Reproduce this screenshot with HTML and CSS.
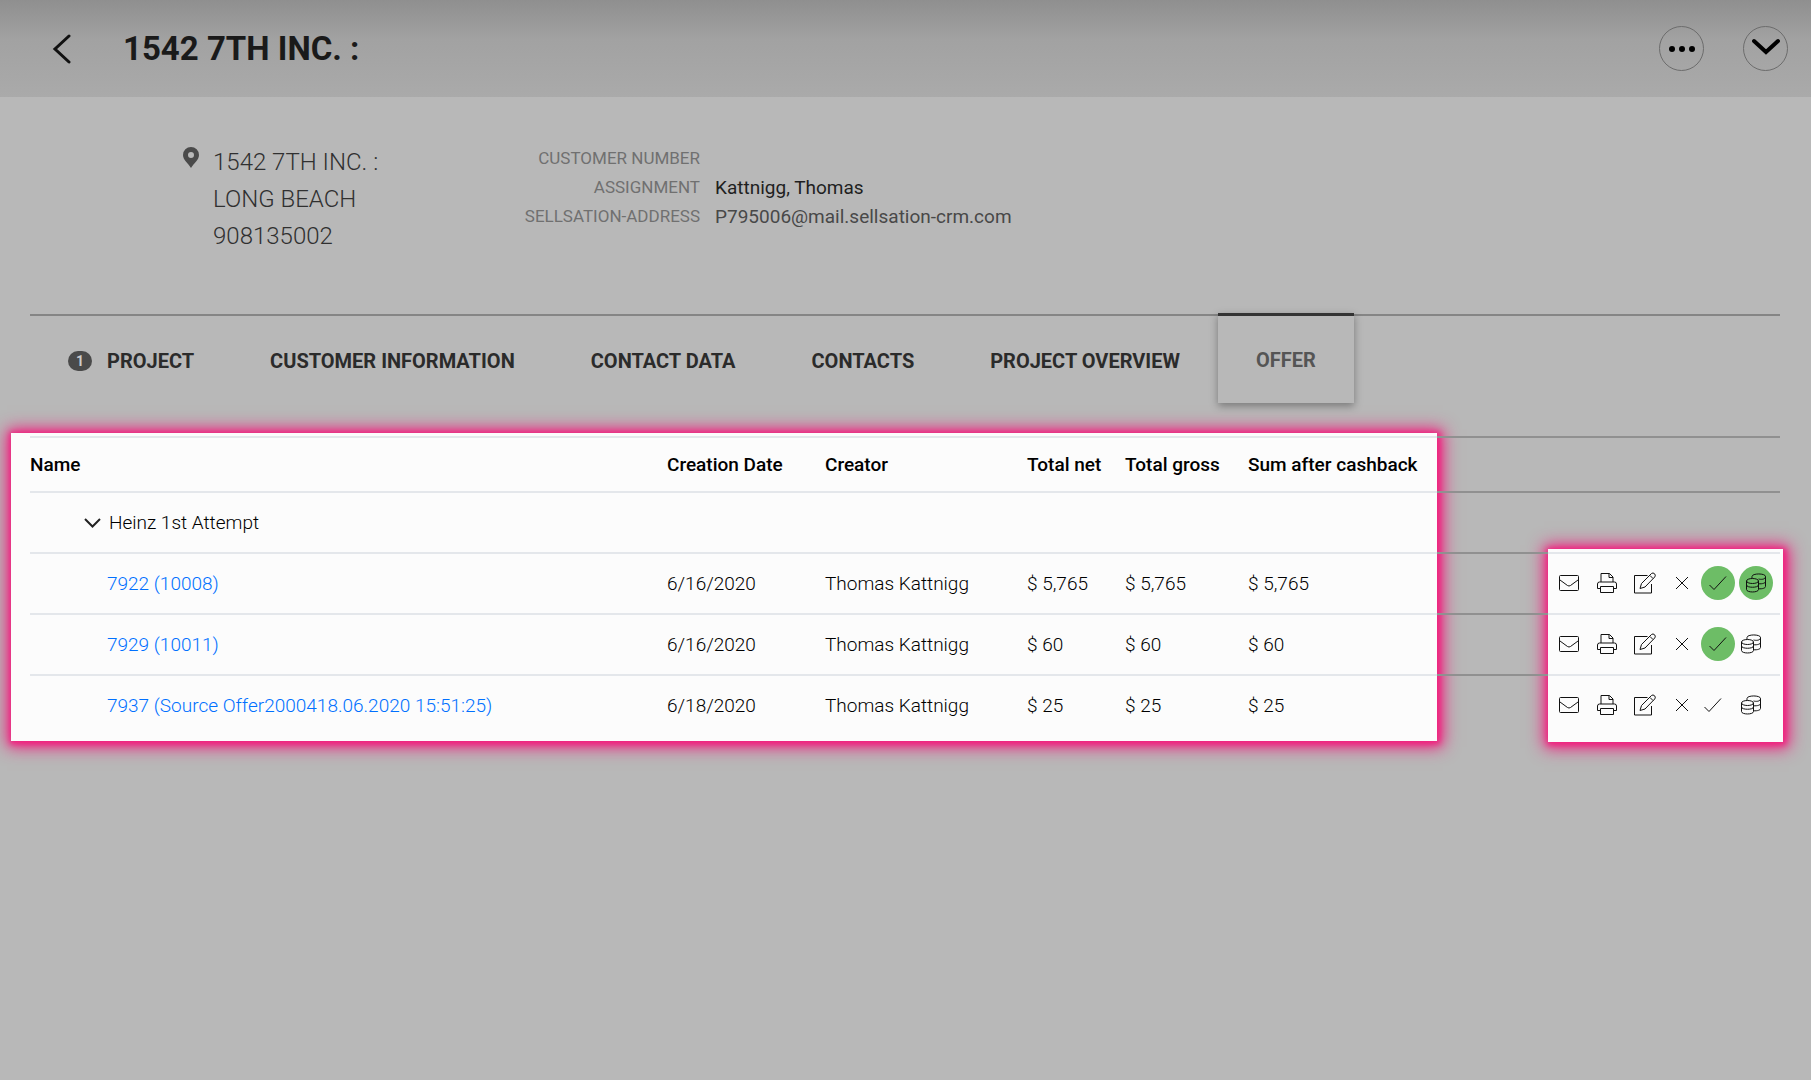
FILE: index.html
```html
<!DOCTYPE html>
<html lang="en">
<head>
    <meta charset="UTF-8">
    <meta name="viewport" content="width=device-width, initial-scale=1.0">
    <title>1542 7TH INC. - Offer</title>
    <link rel="stylesheet" href="styles.css">
</head>
<body>
    <!-- Icon shapes, reused in every row -->
    <svg class="sprite" aria-hidden="true">
        <symbol id="mail" viewBox="0 0 22 22">
            <rect x="1.5" y="3.5" width="19" height="15" rx="1"/>
            <path d="M2 8l7.5 5.5q1.5 1 3 0L20 8"/>
        </symbol>
        <symbol id="print" viewBox="0 0 22 22">
            <path d="M5 10V1.5h8.500L17 5v5M13 1.5V5.500h4M4.500 16.500h-3V12q0-2 2-2h15q2 0 2 2v4.500h-3M4.500 14.500h13v6h-13z"/>
        </symbol>
        <symbol id="edit" viewBox="0 0 24 22">
            <path d="M14.5 3.5H1.5v17.5h17V12M7 16.500l1.500-5L18.500 1.500q1.500-1.200 3 .2t.3 3.200L12 15zM17 3.500l3 3"/>
        </symbol>
        <symbol id="cross" viewBox="0 0 22 22">
            <path d="M5 5l12 12M17 5L5 17"/>
        </symbol>
        <symbol id="check" viewBox="0 0 22 22">
            <path d="M2.5 13l4.500 4.500L19 4.500"/>
        </symbol>
        <symbol id="coins" viewBox="0 0 22 22">
            <ellipse cx="7.5" cy="9" rx="6" ry="2.5"/>
            <path d="M1.5 9v8.500c0 3.300 12 3.300 12 0V9M1.500 13c0 3 12 3 12 0M7 6.500V4.500c0-3.400 13.500-3.400 13.500 0s-5 3-7 2.500M20.500 4.500v10c0 1.600-3 2.500-7 2.300M20.500 9.500c0 1.600-3 2.500-7 2.300"/>
        </symbol>
    </svg>

    <header class="page-header">
        <button type="button" class="back" aria-label="Back">
            <svg width="20" height="30" viewBox="0 0 20 30"><path d="M17 2L3 15l14 13"/></svg>
        </button>
        <h1>1542 7TH INC. :</h1>
        <button type="button" class="round" aria-label="More">
            <svg width="28" height="8" viewBox="0 0 28 8"><circle cx="4" cy="4" r="3"/><circle cx="14" cy="4" r="3"/><circle cx="24" cy="4" r="3"/></svg>
        </button>
        <button type="button" class="round" aria-label="Expand">
            <svg class="chevron" width="28" height="22" viewBox="0 0 28 22"><path d="M2 3l12 11L26 3"/></svg>
        </button>
    </header>

    <main>
        <section class="summary">
            <svg class="pin" width="16" height="21" viewBox="0 0 16 21"><path fill-rule="evenodd" d="M8 0a8 8 0 0 1 8 8c0 5-5 8-8 13C5 16 0 13 0 8a8 8 0 0 1 8-8zm0 5a3 3 0 1 0 0 6 3 3 0 0 0 0-6z"/></svg>
            <address>
                1542 7TH INC. :<br>
                LONG BEACH<br>
                908135002
            </address>
            <dl>
                <dt>CUSTOMER NUMBER</dt>
                <dd></dd>
                <dt>ASSIGNMENT</dt>
                <dd class="strong">Kattnigg, Thomas</dd>
                <dt>SELLSATION-ADDRESS</dt>
                <dd>P795006@mail.sellsation-crm.com</dd>
            </dl>
        </section>

        <nav class="tabs">
            <a href="#project"><span class="count">1</span>PROJECT</a>
            <a href="#customer">CUSTOMER INFORMATION</a>
            <a href="#contact-data">CONTACT DATA</a>
            <a href="#contacts">CONTACTS</a>
            <a href="#overview">PROJECT OVERVIEW</a>
            <a href="#offer" class="active">OFFER</a>
        </nav>

        <div class="offers">
            <div class="highlight highlight-list"></div>
            <div class="highlight highlight-actions"></div>
            <table>
                <colgroup>
                    <col class="col-name">
                    <col class="col-date">
                    <col class="col-creator">
                    <col class="col-net">
                    <col class="col-gross">
                    <col class="col-sum">
                    <col class="col-space">
                    <col class="col-actions">
                </colgroup>
                <thead>
                    <tr>
                        <th>Name</th>
                        <th>Creation Date</th>
                        <th>Creator</th>
                        <th>Total net</th>
                        <th>Total gross</th>
                        <th>Sum after cashback</th>
                        <td class="dim"></td>
                        <td class="dim"></td>
                    </tr>
                </thead>
                <tbody>
                    <tr>
                        <td colspan="6" class="group">
                            <button type="button"><svg width="17" height="10" viewBox="0 0 17 10"><path d="M1 1l7.5 7.500L16 1"/></svg>Heinz 1st Attempt</button>
                        </td>
                        <td class="dim"></td>
                        <td class="dim"></td>
                    </tr>
                    <tr>
                        <td class="name"><a href="#7922">7922 (10008)</a></td>
                        <td>6/16/2020</td>
                        <td>Thomas Kattnigg</td>
                        <td>$ 5,765</td>
                        <td>$ 5,765</td>
                        <td>$ 5,765</td>
                        <td class="dim"></td>
                        <td>
                            <div class="actions">
                                <button type="button" aria-label="Mail"><svg><use href="#mail"/></svg></button>
                                <button type="button" aria-label="Print"><svg><use href="#print"/></svg></button>
                                <button type="button" aria-label="Edit"><svg class="wide"><use href="#edit"/></svg></button>
                                <button type="button" aria-label="Delete"><svg><use href="#cross"/></svg></button>
                                <button type="button" aria-label="Accept" class="state on"><svg><use href="#check"/></svg></button>
                                <button type="button" aria-label="Payment" class="state on"><svg><use href="#coins"/></svg></button>
                            </div>
                        </td>
                    </tr>
                    <tr>
                        <td class="name"><a href="#7929">7929 (10011)</a></td>
                        <td>6/16/2020</td>
                        <td>Thomas Kattnigg</td>
                        <td>$ 60</td>
                        <td>$ 60</td>
                        <td>$ 60</td>
                        <td class="dim"></td>
                        <td>
                            <div class="actions">
                                <button type="button" aria-label="Mail"><svg><use href="#mail"/></svg></button>
                                <button type="button" aria-label="Print"><svg><use href="#print"/></svg></button>
                                <button type="button" aria-label="Edit"><svg class="wide"><use href="#edit"/></svg></button>
                                <button type="button" aria-label="Delete"><svg><use href="#cross"/></svg></button>
                                <button type="button" aria-label="Accept" class="state on"><svg><use href="#check"/></svg></button>
                                <button type="button" aria-label="Payment" class="state"><svg><use href="#coins"/></svg></button>
                            </div>
                        </td>
                    </tr>
                    <tr>
                        <td class="name"><a href="#7937">7937 (Source Offer2000418.06.2020 15:51:25)</a></td>
                        <td>6/18/2020</td>
                        <td>Thomas Kattnigg</td>
                        <td>$ 25</td>
                        <td>$ 25</td>
                        <td>$ 25</td>
                        <td class="dim"></td>
                        <td>
                            <div class="actions">
                                <button type="button" aria-label="Mail"><svg><use href="#mail"/></svg></button>
                                <button type="button" aria-label="Print"><svg><use href="#print"/></svg></button>
                                <button type="button" aria-label="Edit"><svg class="wide"><use href="#edit"/></svg></button>
                                <button type="button" aria-label="Delete"><svg><use href="#cross"/></svg></button>
                                <button type="button" aria-label="Accept" class="state"><svg><use href="#check"/></svg></button>
                                <button type="button" aria-label="Payment" class="state"><svg><use href="#coins"/></svg></button>
                            </div>
                        </td>
                    </tr>
                </tbody>
            </table>
        </div>
    </main>
</body>
</html>
```
FILE: styles.css
```css
* {
    box-sizing: border-box;
}
body {
    margin: 0;
    min-height: 100vh;
    background-color: #b8b8b8;
    font-family: Roboto, sans-serif;
    font-size: 19px;
    font-weight: 300;
    color: #000;
}
button {
    padding: 0;
    border: none;
    background: none;
    font: inherit;
    color: inherit;
    cursor: pointer;
}
a {
    text-decoration: none;
}
svg {
    display: block;
}
.sprite {
    position: absolute;
    width: 0;
    height: 0;
}

/* Header */
.page-header {
    display: flex;
    align-items: center;
    height: 97px;
    padding: 0 23px 0 52px;
    background: linear-gradient(#8f8f8f, #a2a2a2 40px, #aaa);
}
.back svg, .chevron {
    fill: none;
    stroke: #111;
    stroke-width: 3;
    stroke-linecap: round;
}
.round .chevron {
    stroke: #000;
    stroke-width: 4;
}
h1 {
    flex: 1;
    margin: 0 0 0 51px;
    font-size: 33px;
    font-weight: 700;
    line-height: 40px;
    color: #1a1a1a;
}
.round {
    display: flex;
    align-items: center;
    justify-content: center;
    width: 45px;
    height: 45px;
    margin-left: 39px;
    border: 1px solid #6c6c6c;
    border-radius: 50%;
}

/* Customer summary */
.summary {
    display: flex;
    height: 217px;
    padding: 47px 30px 0 183px;
    color: #303030;
}
.pin {
    margin: 3px 14px 0 0;
    fill: #4a4a4a;
}
address {
    width: 304px;
    font-size: 24px;
    font-style: normal;
    line-height: 37px;
}
dl {
    display: grid;
    grid-template-columns: 183px auto;
    grid-auto-rows: 29px;
    column-gap: 15px;
    margin: 0;
    font-weight: 400;
    line-height: 29px;
}
dt {
    font-size: 17px;
    text-align: right;
    color: #707070;
}
dd {
    margin: 0;
    color: #484848;
}
dd.strong {
    color: #1f1f1f;
}

/* Tabs */
.tabs {
    display: flex;
    align-items: flex-start;
    height: 122px;
    margin: 0 31px 0 30px;
    border-top: 2px solid #858585;
}
.tabs a {
    display: flex;
    align-items: center;
    height: 90px;
    padding: 0 38px;
    font-size: 20px;
    font-weight: 700;
    color: #2b2b2b;
}
.tabs a.active {
    margin-top: -3px;
    border-top: 3px solid #333;
    box-shadow: 0 3px 8px rgba(0, 0, 0, 0.35);
    color: #555;
}
.count {
    width: 24px;
    height: 20px;
    margin-right: 15px;
    border-radius: 10px;
    background-color: #4a4a4a;
    font-size: 14px;
    line-height: 20px;
    text-align: center;
    color: #ccc;
}

/* Offer list */
.offers {
    position: relative;
    margin: 0 31px 0 30px;
}
.highlight {
    position: absolute;
    background-color: #fcfcfc;
    box-shadow: 1px 1px 6px 2px #f0217f, 1px 1px 16px 5px #f0217f;
}
.highlight-list {
    top: -3px;
    right: 343px;
    bottom: -6px;
    left: -19px;
}
.highlight-actions {
    top: 113px;
    right: -3px;
    bottom: -7px;
    width: 235px;
}
table {
    position: relative;
    width: 100%;
    border-spacing: 0;
    table-layout: fixed;
}
.col-date { width: 158px; }
.col-creator { width: 202px; }
.col-net { width: 98px; }
.col-gross { width: 123px; }
.col-sum { width: 189px; }
.col-space { width: 111px; }
.col-actions { width: 232px; }
th, td {
    height: 61px;
    padding: 0;
    border-top: 2px solid #e4e7eb;
    text-align: left;
    white-space: nowrap;
}
th {
    height: 55px;
    font-weight: 500;
}
thead td {
    height: 55px;
}
td.dim {
    border-top-color: #909090;
}
.group button {
    display: flex;
    align-items: center;
    gap: 8px;
    margin-left: 54px;
}
.group svg {
    fill: none;
    stroke: #222;
    stroke-width: 2;
}
.name {
    padding-left: 77px;
}
.name a {
    color: #0070ff;
}
.actions {
    display: grid;
    grid-template-columns: 38px 38px 38px 35px 38px 38px;
    justify-items: center;
    margin-bottom: 2px;
    padding-left: 2px;
}
.actions button {
    display: flex;
    align-items: center;
    justify-content: center;
    width: 28px;
    height: 34px;
}
.actions .state {
    justify-self: start;
}
.actions .on {
    justify-self: center;
    width: 34px;
    border-radius: 50%;
    background-color: #6dbd66;
}
.actions svg {
    width: 22px;
    height: 22px;
    fill: none;
    stroke: #111;
    stroke-width: 1;
}
.actions .wide {
    width: 24px;
}
```
